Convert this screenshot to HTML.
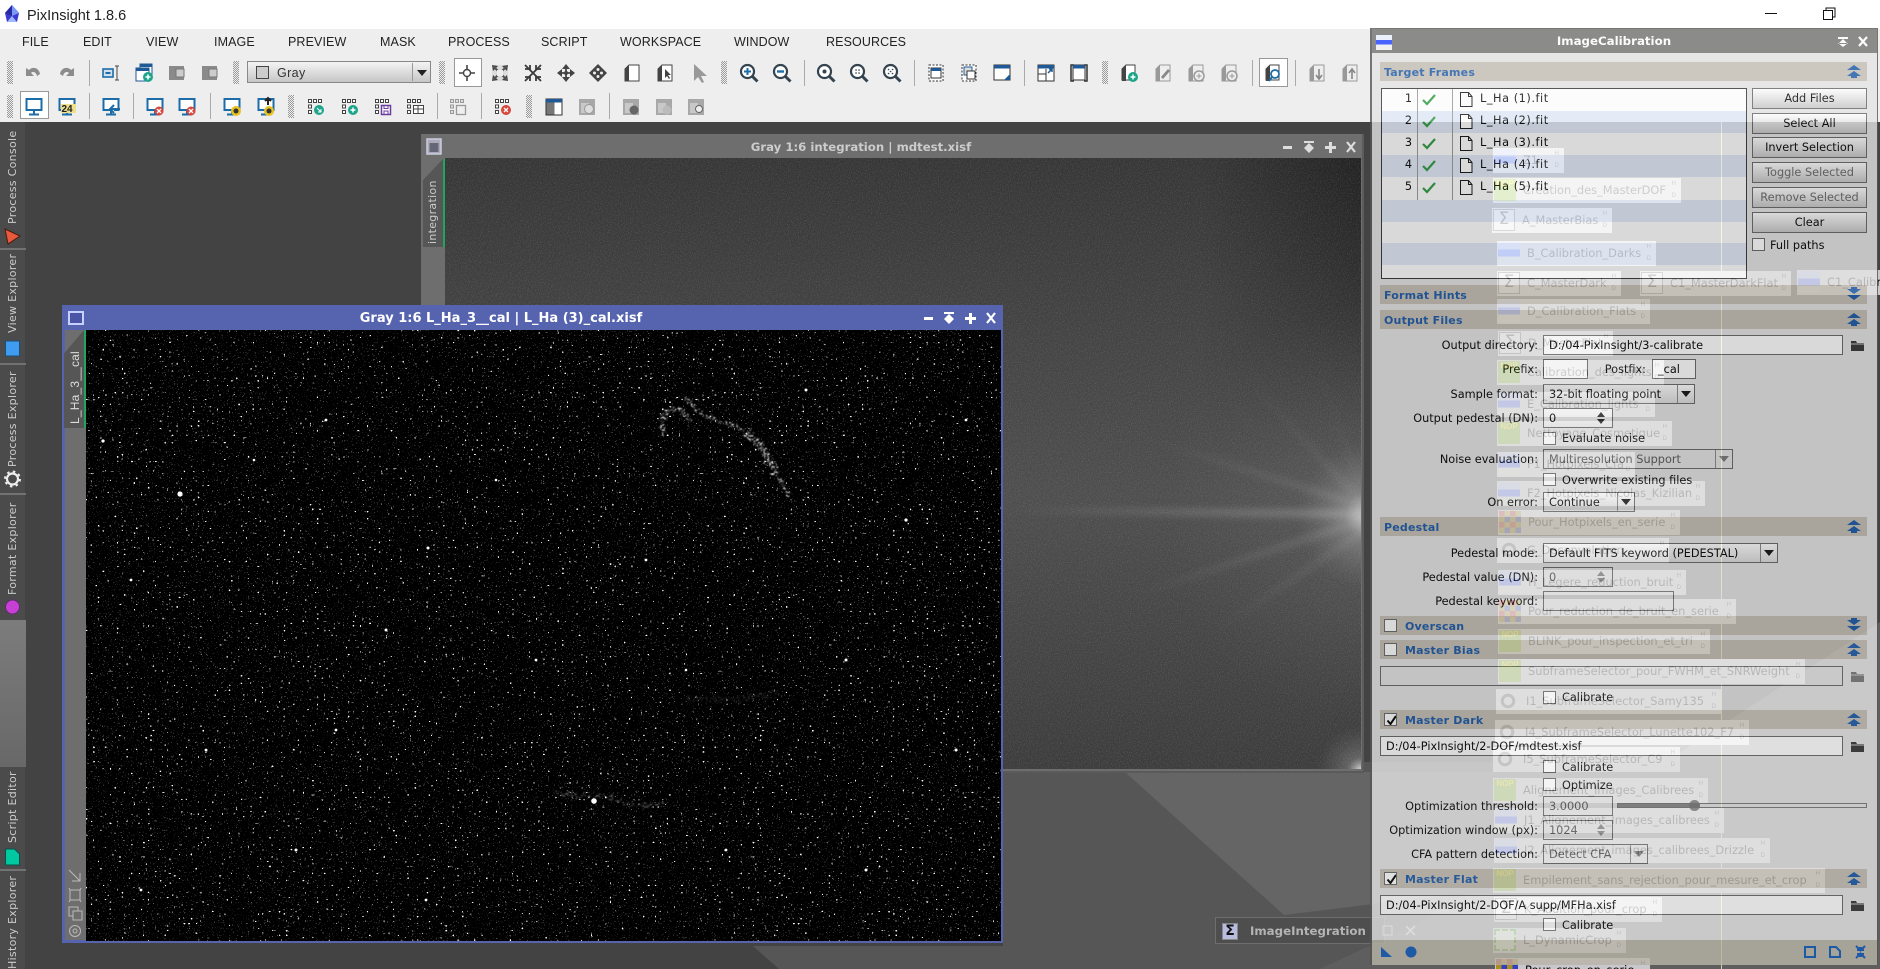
<!DOCTYPE html>
<html><head><meta charset="utf-8"><title>PixInsight 1.8.6</title>
<style>
html,body{margin:0;padding:0;width:1880px;height:969px;overflow:hidden;background:#424242;font-family:"Liberation Sans",sans-serif;font-size:12px;color:#111}
#root{position:relative;width:1880px;height:969px;overflow:hidden;contain:paint}
.a,.a *{box-sizing:border-box}
.a{position:absolute;white-space:nowrap}
.m{top:32px;font-size:12.5px;line-height:20px;color:#222;letter-spacing:.1px}
.grip{position:absolute;width:6px;background:conic-gradient(#9a9a9a 25%,#eee 0 50%,#9a9a9a 0 75%,#eee 0) 0 0/2px 2px}
.sep{position:absolute;width:1px;background:#aaa}
.vt{writing-mode:vertical-rl;transform:rotate(180deg);color:#ccc;font-family:"DejaVu Sans",sans-serif;font-size:11px;letter-spacing:.3px;line-height:14px}
.tab{position:absolute;left:0;width:25px;background:#4b4b4b}
.wt{font-family:"DejaVu Sans",sans-serif;font-weight:bold;line-height:24px;text-align:center}
.g{position:absolute;height:25px;background:#c8c8cc;white-space:nowrap;color:#000;font-family:"DejaVu Sans",sans-serif;font-size:11.4px;line-height:24px;padding-left:30px;box-sizing:border-box}
.g i{position:absolute;left:1px;top:1px;width:22px;height:22px;font-style:normal;display:block;overflow:hidden;text-align:center;line-height:22px}
.g:before,.g:after{position:absolute;right:5px;font:6px/7px "Liberation Sans",sans-serif;color:#333}
.g:before{content:"H";top:3px}.g:after{content:"D";bottom:3px}
.n{background:#7ab010;color:#ffe800;font:bold 8px "Liberation Sans",sans-serif!important}
.b{background:linear-gradient(180deg,#b4c0ec 0 35%,#3a5cf0 35% 65%,#d0d0c8 65%)}
.s{background:#ddd;border:1px solid #444;color:#111;font-size:17px;line-height:19px!important;font-family:"DejaVu Sans",sans-serif;box-sizing:border-box}
.ge{background:radial-gradient(circle,transparent 4px,#444 4.5px 7px,transparent 7.5px)}
.gr{background:conic-gradient(#a89020 25%,#3040c0 0 50%,#a89020 0 75%,#c02020 0) 0 0/11px 11px}
.cr{background:#d8e8c8;border:2px dashed #40a020;box-sizing:border-box}
.sec{position:absolute;left:1380px;width:487px;height:19px;background:#c4bfb3;color:#1a58a8;font-family:"DejaVu Sans",sans-serif;font-weight:bold;font-size:11px;line-height:21px;padding-left:4px;letter-spacing:.2px}
.l{position:absolute;right:342px;line-height:22px;font-family:"DejaVu Sans",sans-serif;font-size:11.3px;color:#000}
.e{position:absolute;height:20px;background:#fff;border:1px solid #666;line-height:20px;padding-left:5px;font-family:"DejaVu Sans",sans-serif;font-size:11.3px;color:#000;white-space:nowrap}
.d{background:transparent;color:#555}
.c{position:absolute;height:20px;border:1px solid #666;background:linear-gradient(#fff,#dcdcdc);line-height:20px;padding-left:5px;font-family:"DejaVu Sans",sans-serif;font-size:11.3px;color:#000;white-space:nowrap}
.c b{position:absolute;right:0;top:0;width:17px;height:18px;border-left:1px solid #888}
.c b:after{content:"";position:absolute;left:3px;top:6px;border:5px solid transparent;border-top:6px solid #111;border-bottom:0}
.c.d{background:transparent;color:#555}.c.d b:after{border-top-color:#777}
.sp:after{content:"";position:absolute;right:7px;top:3px;border:4px solid transparent;border-bottom:5px solid #222;border-top:0}
.sp:before{content:"";position:absolute;right:7px;bottom:3px;border:4px solid transparent;border-top:5px solid #222;border-bottom:0}
.sp.d:after{border-bottom-color:#888}.sp.d:before{border-top-color:#888}
.k{position:absolute;left:1543px;width:13px;height:13px;background:#fff;border:1px solid #666}
.t{position:absolute;left:1562px;line-height:16px;font-family:"DejaVu Sans",sans-serif;font-size:11.3px;color:#000}
.btn{position:absolute;left:1752px;width:115px;height:21px;border:1px solid #666;background:linear-gradient(#fff,#c8c8c8);text-align:center;line-height:19px;font-family:"DejaVu Sans",sans-serif;font-size:11.3px;color:#000}
.btn.d{color:#666}
.r{position:absolute;left:1382px;width:364px;height:22px;background:#e2eaf8}
.num{position:absolute;left:1382px;width:30px;text-align:right;line-height:22px;font-family:"DejaVu Sans",sans-serif;font-size:11.3px;color:#000}
.f{position:absolute;left:1480px;line-height:22px;font-family:"DejaVu Sans",sans-serif;font-size:11.3px;letter-spacing:.55px;color:#000}
</style></head><body><div id="root">

<svg width="0" height="0" style="position:absolute"><defs>
<filter id="s1" x="0" y="0" width="100%" height="100%" color-interpolation-filters="sRGB"><feTurbulence type="fractalNoise" baseFrequency=".8" numOctaves="1" seed="7"/><feColorMatrix values="0 0 0 0 1 0 0 0 0 1 0 0 0 0 1 14 0 0 0 -9.3"/></filter>
<filter id="s2" x="0" y="0" width="100%" height="100%" color-interpolation-filters="sRGB"><feTurbulence type="fractalNoise" baseFrequency=".42" numOctaves="1" seed="23"/><feColorMatrix values="0 0 0 0 1 0 0 0 0 1 0 0 0 0 1 22 0 0 0 -15.6"/></filter>
<filter id="nz" x="0" y="0" width="100%" height="100%" color-interpolation-filters="sRGB"><feTurbulence type="fractalNoise" baseFrequency=".9" numOctaves="2" seed="3"/><feColorMatrix values="0 0 0 0 1 0 0 0 0 1 0 0 0 0 1 2.5 0 0 0 -1.15"/></filter>
<filter id="neb" x="-20%" y="-20%" width="140%" height="140%" color-interpolation-filters="sRGB"><feTurbulence type="fractalNoise" baseFrequency=".25" numOctaves="2" seed="5" result="t"/><feDisplacementMap in="SourceGraphic" in2="t" scale="10" xChannelSelector="R" yChannelSelector="G" result="d"/><feTurbulence type="fractalNoise" baseFrequency=".55" numOctaves="2" seed="11"/><feColorMatrix values="0 0 0 0 1 0 0 0 0 1 0 0 0 0 1 6 0 0 0 -2.9" result="sp"/><feComposite in="d" in2="sp" operator="in"/><feGaussianBlur stdDeviation=".4"/></filter>
<filter id="bl6" x="-20%" y="-40%" width="140%" height="180%"><feGaussianBlur stdDeviation="4"/></filter>

<g id="undo"><path d="M4 6v8h8l-3-3c2-2 5-1 6 3l3-2c-1-6-7-8-11-4z" fill="#8c8c8c"/></g>
<g id="redo"><path d="M18 6v8h-8l3-3c-2-2-5-1-6 3l-3-2c1-6 7-8 11-4z" fill="#8c8c8c"/></g>
<g id="ibeam"><rect x="3" y="7" width="10" height="8" fill="#cfe0ee" stroke="#1c6ca8" stroke-width="1.6"/><rect x="5.5" y="10" width="5" height="2" fill="#1c6ca8"/><path d="M15 4h4M17 4v14M15 18h4" stroke="#444" fill="none"/></g>
<g id="wp"><rect x="7" y="2" width="12" height="10" fill="#fff" stroke="#1f5a96"/><rect x="7" y="2" width="12" height="3" fill="#1f5a96"/><rect x="3" y="6" width="13" height="13" fill="#fff" stroke="#1f5a96"/><rect x="3" y="6" width="13" height="3" fill="#1f5a96"/><circle cx="15" cy="15" r="5" fill="#1ca58a"/><path d="M12.5 15h5M15 12.5v5" stroke="#fff" stroke-width="1.6"/></g>
<g id="gs"><rect x="3" y="4" width="15" height="14" fill="#8a8a8a"/><rect x="10" y="7" width="8" height="8" fill="#ccc" stroke="#777"/></g>
<g id="tgt"><path d="M11 3v16M3 11h16" stroke="#444" stroke-width="1.6"/><circle cx="11" cy="11" r="3.5" fill="#fff" stroke="#444" stroke-width="1.4"/></g>
<g id="fo"><path d="M3 3h16v16H3z" fill="#ddd"/><path d="M3 3l6 1-5 5zM19 3l-6 1 5 5zM3 19l6-1-5-5zM19 19l-6-1 5-5z" fill="#444"/><path d="M4 4l14 14M18 4L4 18" stroke="#555" stroke-width="2"/><rect x="8" y="8" width="6" height="6" fill="#eee"/></g>
<g id="fi"><path d="M3 3l16 16M19 3L3 19M3 7h5M8 3v5M19 7h-5M14 3v5M3 15h5M8 19v-5M19 15h-5M14 19v-5" stroke="#3a3a3a" stroke-width="1.8"/></g>
<g id="mv"><path d="M11 2l4 5H7zM11 20l4-5H7zM2 11l5-4v8zM20 11l-5-4v8z" fill="#444"/><path d="M11 5v12M5 11h12" stroke="#444" stroke-width="1.8"/><circle cx="11" cy="11" r="2" fill="#444"/></g>
<g id="dm"><path d="M11 2l9 9-9 9-9-9z" fill="#444"/><circle cx="11" cy="7.5" r="1.5" fill="#eee"/><circle cx="11" cy="14.5" r="1.5" fill="#eee"/><circle cx="7.5" cy="11" r="1.5" fill="#eee"/><circle cx="14.5" cy="11" r="1.5" fill="#eee"/></g>
<g id="dc"><path d="M4 7l4-4h10v16H4z" fill="#fff" stroke="#444"/><path d="M4 7l4-4v16H4z" fill="#444"/></g>
<g id="dcc"><path d="M4 7l4-4h10v16H4z" fill="#fff" stroke="#444"/><path d="M4 7l4-4v16H4z" fill="#444"/><path d="M11 7v9l2-2 2 3 1-1-2-3h3z" fill="#444"/></g>
<g id="cur"><path d="M6 2v17l4-4 4 6 2-1-3-6h6z" fill="#999"/></g>
<g id="mg"><circle cx="9.5" cy="9.5" r="6.5" fill="#fff" stroke="#34444f" stroke-width="2.2"/><path d="M14 14l5.5 5.5" stroke="#34444f" stroke-width="3"/></g>
<g id="wd"><rect x="4" y="3" width="14" height="16" fill="#fff" stroke="#333" stroke-dasharray="2 1.5"/><rect x="6" y="6" width="10" height="10" fill="#fff" stroke="#333"/><rect x="6" y="6" width="10" height="3" fill="#1f5a96"/></g>
<g id="wd2"><rect x="4" y="3" width="14" height="16" fill="#fff" stroke="#333" stroke-dasharray="2 1.5"/><rect x="6" y="5" width="8" height="8" fill="#ddd" stroke="#1f5a96"/><rect x="9" y="9" width="8" height="8" fill="#fff" stroke="#333"/></g>
<g id="wa"><rect x="3" y="3" width="16" height="15" fill="#fff" stroke="#333"/><rect x="3" y="3" width="16" height="3.5" fill="#1f5a96"/><path d="M19 18h-6l6-6z" fill="#1f5a96"/></g>
<g id="wb"><rect x="3" y="3" width="16" height="16" fill="#fff" stroke="#333"/><rect x="3" y="3" width="16" height="3.5" fill="#1f5a96"/><path d="M11 7v12M3 12h8" stroke="#333"/><path d="M13 11l4-4M14 7h3v3" stroke="#1f5a96" fill="none" stroke-width="1.5"/></g>
<g id="wc"><path d="M6 3H3v16h3M16 3h3v16h-3" stroke="#333" fill="none" stroke-width="1.5"/><rect x="5" y="3" width="12" height="15" fill="#fff" stroke="#333"/><rect x="5" y="3" width="12" height="3.5" fill="#1f5a96"/></g>
<g id="dk"><path d="M4 7l4-4h9v15H4z" fill="#fff" stroke="#444"/><path d="M4 7l4-4v16H4z" fill="#444"/></g>
<g id="dgr"><path d="M4 7l4-4h10v16H4z" fill="#eee" stroke="#999"/><path d="M4 7l4-4v16H4z" fill="#999"/></g>
<g id="mon"><rect x="3.5" y="3" width="15" height="11" fill="#fff" stroke="#1c6ca8" stroke-width="2"/><path d="M11 14v4M6 18.5h10" stroke="#1c6ca8" stroke-width="2"/></g>
<g id="gd"><g fill="#fff" stroke="#444"><rect x="3.5" y="3.5" width="3" height="3"/><rect x="8.5" y="3.5" width="3" height="3"/><rect x="13.5" y="3.5" width="3" height="3"/><rect x="3.5" y="9" width="3" height="3"/><rect x="3.5" y="14.5" width="3" height="3"/></g></g>
<g id="ggd"><g fill="#ddd" stroke="#999"><rect x="3.5" y="3.5" width="3" height="3"/><rect x="8.5" y="3.5" width="3" height="3"/><rect x="13.5" y="3.5" width="3" height="3"/><rect x="3.5" y="9" width="3" height="3"/><rect x="3.5" y="14.5" width="3" height="3"/></g></g>
<g id="ch"><rect x="3" y="3" width="16" height="16" fill="#a8a8a8"/><rect x="5" y="7" width="8" height="10" fill="#c8c8c8"/></g>
<g id="chb"><rect x="3" y="3" width="16" height="16" fill="#fff" stroke="#333"/><rect x="3" y="3" width="16" height="3.5" fill="#1f5a96"/><rect x="3.5" y="6.5" width="8" height="12" fill="#777"/></g>
<g id="upp"><path d="M1 7l7-5 7 5zM1 13l7-5 7 5zM5 13h6v2H5z" fill="#1a58a8"/></g>
<g id="dnn"><path d="M5 0h6v2H5zM1 2h14L8 7zM1 8h14l-7 5z" fill="#1a58a8"/></g>
<g id="fold"><path d="M1 3h5l1 2h7v8H1z" fill="#333"/><path d="M1 6h13" stroke="#ccc"/></g>
<g id="fig"><path d="M1 3h5l1 2h7v8H1z" fill="#777"/><path d="M1 6h13" stroke="#ccc"/></g>
<g id="chk"><path d="M1 8l4 4 8-9" fill="none" stroke="#2c9a40" stroke-width="2.2"/></g>
<g id="doc"><path d="M.5 1.5h8l3.5 4v10H.5z" fill="#fff" stroke="#111"/><path d="M8.5 1.5v4h3.5" fill="none" stroke="#111"/></g>
<g id="cm"><path d="M2.5 6.5l3 3.5 5.5-8" fill="none" stroke="#000" stroke-width="2"/></g>
</defs></svg>

<!-- wallpaper -->
<svg class="a" style="left:0;top:122px" width="1880" height="847">
<rect width="1880" height="847" fill="#424242"/>
<rect x="26" width="1854" height="847" fill="#434343"/>
<polygon points="1003,640 1880,640 1880,847 779,847 753,824 1003,824" fill="#565656"/>
<polygon points="1125,650 1880,650 1880,720 1284,793" fill="#656565"/>
<polygon points="1420,800 1880,500 1880,847 1320,847" fill="#5e5e5e"/>
<rect x="1721" y="0" width="1" height="847" fill="#d8d0a0"/>
</svg>

<!-- back window -->
<div class="a" style="left:421px;top:134px;width:943px;height:639px;background:#6e6e6e;border-bottom:2px solid #5a5a5a;border-right:2px solid #5c5c5c">
<div class="a wt" style="left:0;top:1px;width:880px;color:#ccc;font-size:11.7px">Gray 1:6 integration | mdtest.xisf</div>
<svg class="a" style="left:5px;top:4px" width="16" height="17"><rect x="1" y="1" width="14" height="15" fill="#aab" stroke="#ccd" stroke-width="1.5"/><rect x="3.5" y="5" width="9" height="9" fill="#667"/></svg>
<svg class="a" style="left:855px;top:6px" width="85" height="14"><path d="M7 6h9v3H7z" fill="#ddd"/><path d="M28 1h10v2H28zM33 3l5 5H28zM33 13l5-5H28z" fill="#ddd"/><path d="M53 2h3v4h4v3h-4v4h-3V9h-4V6h4z" fill="#ddd"/><path d="M71 2l8 10M79 2l-8 10" stroke="#ddd" stroke-width="2.2"/></svg>
</div>
<svg class="a" style="left:445px;top:158px" width="916" height="613">
<defs>
<linearGradient id="bg1" x1="0" y1="0" x2="0" y2="1"><stop offset="0" stop-color="#363636"/><stop offset=".3" stop-color="#444444"/><stop offset=".55" stop-color="#4e4e4e"/><stop offset="1" stop-color="#3c3c3c"/></linearGradient>
<radialGradient id="st" gradientUnits="userSpaceOnUse" cx="925" cy="358" r="210"><stop offset="0" stop-color="#fff" stop-opacity=".75"/><stop offset=".12" stop-color="#ddd" stop-opacity=".32"/><stop offset=".35" stop-color="#999" stop-opacity=".1"/><stop offset="1" stop-color="#888" stop-opacity="0"/></radialGradient>
<radialGradient id="cr" gradientUnits="userSpaceOnUse" cx="916" cy="613" r="45"><stop offset="0" stop-color="#fff" stop-opacity=".85"/><stop offset=".3" stop-color="#bbb" stop-opacity=".3"/><stop offset="1" stop-color="#888" stop-opacity="0"/></radialGradient>
<linearGradient id="rs" x1="0" y1="0" x2="1" y2="0"><stop offset="0" stop-color="#1c1c1c" stop-opacity="0"/><stop offset="1" stop-color="#1c1c1c" stop-opacity=".75"/></linearGradient>
<linearGradient id="rm" x1="0" y1="0" x2="0" y2="1"><stop offset="0" stop-color="#fff"/><stop offset="1" stop-color="#000"/></linearGradient>
<mask id="mk"><rect x="760" width="156" height="300" fill="url(#rm)"/></mask>
</defs>
<rect width="916" height="613" fill="url(#bg1)"/>
<rect x="760" width="156" height="300" fill="url(#rs)" mask="url(#mk)"/>
<rect width="916" height="613" fill="url(#st)"/>
<g filter="url(#bl6)" opacity=".24"><polygon points="916,352 560,352 916,360" fill="#fff"/><polygon points="916,345 700,280 916,350" fill="#ccc"/><polygon points="916,360 680,440 916,366" fill="#ccc"/><polygon points="916,340 800,220 916,345" fill="#bbb"/><polygon points="916,372 760,480 916,378" fill="#aaa"/><polygon points="916,330 860,170 916,335" fill="#aaa"/></g>
<rect width="916" height="613" fill="url(#cr)"/>
<rect width="916" height="613" filter="url(#nz)" opacity=".14"/>
<rect y="611" width="916" height="2" fill="#6e6e6e"/>
</svg>
<div class="a" style="left:423px;top:159px;width:20px;height:88px;background:#565656;clip-path:polygon(100% 0,100% 100%,0 100%,0 24%)"></div>
<div class="a" style="left:443px;top:159px;width:2px;height:88px;background:#22a45c"></div>
<div class="a vt" style="left:426px;top:180px;height:64px">integration</div>

<!-- ImageIntegration icon -->
<div class="a" style="left:1215px;top:917px;width:170px;height:27px;background:#4e4e4e;border:1px solid #6e6e6e">
<div class="a" style="left:6px;top:5px;width:16px;height:17px;background:#b8bce0;border:1px solid #888;color:#111;font:bold 14px/15px 'DejaVu Sans',sans-serif;text-align:center">Σ</div>
<div class="a" style="left:34px;top:1px;font:bold 11.8px/24px 'DejaVu Sans',sans-serif;color:#b4b4b4">ImageIntegration</div>
</div>

<!-- front window -->
<div class="a" style="left:62px;top:305px;width:941px;height:638px;background:#6e6e6e;border:3px solid #5663ae;border-top:0">
<div class="a" style="left:-3px;top:0;width:941px;height:25px;background:#5663ae"></div>
<div class="a wt" style="left:0;top:2px;width:872px;color:#fff;font-size:13px">Gray 1:6 L_Ha_3__cal | L_Ha (3)_cal.xisf</div>
<svg class="a" style="left:3px;top:6px" width="16" height="14"><rect x="1" y="1" width="14" height="12" fill="#4a55a5" stroke="#c8d0ff" stroke-width="2"/></svg>
<svg class="a" style="left:851px;top:6px" width="85" height="14"><path d="M8 6h9v3H8z" fill="#fff"/><path d="M28 1h10v2H28zM33 3l5 5H28zM33 13l5-5H28z" fill="#fff"/><path d="M53 2h3v4h4v3h-4v4h-3V9h-4V6h4z" fill="#fff"/><path d="M71 2l8 10M79 2l-8 10" stroke="#fff" stroke-width="2.2"/></svg>
</div>
<svg class="a" style="left:86px;top:330px" width="915" height="611">
<rect width="915" height="611" fill="#000"/>
<rect width="915" height="611" filter="url(#s1)" opacity=".45"/>
<rect width="915" height="611" filter="url(#s2)"/>
<g filter="url(#neb)" fill="none" stroke="#e8e8e8" stroke-linecap="round">
<path d="M601 68C606 78 616 86 637 92S672 110 681 125" stroke-width="3"/>
<path d="M662 104C676 114 682 128 690 142" stroke-width="7"/>
<path d="M680 130C690 145 698 155 704 166" stroke-width="3"/>
<path d="M577 104C574 88 580 78 590 79S600 88 602 90" stroke-width="4"/>
<path d="M470 463C490 468 510 462 530 470S560 475 575 473" stroke-width="3.5" opacity=".4"/>
<path d="M600 370C630 368 660 372 690 362" stroke-width="5" opacity=".15"/>
</g>
<g fill="#fff">
<circle cx="94" cy="164" r="2.6"/><circle cx="508" cy="471" r="2.8"/><circle cx="17" cy="111" r="1.6"/><circle cx="342" cy="218" r="1.5"/>
<circle cx="45" cy="250" r="1.4"/><circle cx="168" cy="130" r="1.3"/><circle cx="240" cy="90" r="1.4"/><circle cx="300" cy="300" r="1.5"/>
<circle cx="120" cy="420" r="1.4"/><circle cx="210" cy="520" r="1.5"/><circle cx="410" cy="150" r="1.3"/><circle cx="450" cy="330" r="1.4"/>
<circle cx="560" cy="230" r="1.4"/><circle cx="720" cy="60" r="1.5"/><circle cx="820" cy="190" r="1.6"/><circle cx="760" cy="330" r="1.5"/>
<circle cx="870" cy="420" r="1.5"/><circle cx="640" cy="520" r="1.4"/><circle cx="340" cy="570" r="1.4"/><circle cx="780" cy="540" r="1.5"/>
<circle cx="55" cy="560" r="1.4"/><circle cx="880" cy="90" r="1.4"/><circle cx="600" cy="340" r="1.3"/><circle cx="250" cy="400" r="1.4"/>
</g>
</svg>
<div class="a" style="left:64px;top:330px;width:20px;height:98px;background:#565656;clip-path:polygon(100% 0,100% 100%,0 100%,0 24%)"></div>
<div class="a" style="left:84px;top:330px;width:2px;height:98px;background:#22a45c"></div>
<div class="a vt" style="left:68px;top:352px;height:72px;font-family:'Liberation Sans',sans-serif;font-size:12px;letter-spacing:.2px;color:#ddd">L_Ha_3__cal</div>
<svg class="a" style="left:66px;top:868px" width="18" height="72" fill="none" stroke="#bbb"><path d="M3 2l11 11M14 5v8H6"/><path d="M4 22h10v10H4z"/><path d="M4 22l-1-2M14 22l1-2M4 32l-1 2M14 32l1 2"/><rect x="3" y="39" width="9" height="9"/><rect x="7" y="43" width="9" height="9" fill="#6e6e6e"/><circle cx="9" cy="63" r="5.5"/><circle cx="9" cy="63" r="2"/></svg>

<!-- left tabs -->
<div class="tab" style="top:122px;height:126px"></div>
<div class="a" style="left:0;top:248px;width:26px;height:2px;background:#727272"></div>
<div class="tab" style="top:250px;height:113px"></div>
<div class="a" style="left:0;top:363px;width:26px;height:2px;background:#727272"></div>
<div class="tab" style="top:365px;height:128px"></div>
<div class="a" style="left:0;top:493px;width:26px;height:2px;background:#727272"></div>
<div class="tab" style="top:495px;height:125px"></div>
<div class="a" style="left:0;top:620px;width:26px;height:147px;background:linear-gradient(#7c7c7c,#686868)"></div>
<div class="tab" style="top:767px;height:102px"></div>
<div class="a" style="left:0;top:869px;width:26px;height:2px;background:#727272"></div>
<div class="tab" style="top:871px;height:98px"></div>
<div class="a vt" style="left:6px;top:126px;height:98px">Process Console</div>
<div class="a vt" style="left:6px;top:255px;height:78px">View Explorer</div>
<div class="a vt" style="left:6px;top:368px;height:99px">Process Explorer</div>
<div class="a vt" style="left:6px;top:499px;height:96px">Format Explorer</div>
<div class="a vt" style="left:6px;top:771px;height:72px">Script Editor</div>
<div class="a vt" style="left:6px;top:876px;height:93px">History Explorer</div>
<svg class="a" style="left:0;top:122px" width="26" height="770">
<path d="M5 107l15 7-12 8z" fill="#e85a3c" stroke="#4a1a10"/>
<rect x="5.5" y="219" width="14" height="15" fill="#3f9cf0" stroke="#1e4e78"/>
<circle cx="12.5" cy="357" r="5.5" fill="none" stroke="#eee" stroke-width="2.2"/><circle cx="12.5" cy="357" r="7.5" fill="none" stroke="#eee" stroke-width="2" stroke-dasharray="2.5 3.4"/>
<circle cx="12.5" cy="485" r="7" fill="#c640d4" stroke="#602a70"/>
<path d="M5.5 727h9l5 5v11h-14z" fill="#00c8a0" stroke="#0e5048"/>
</svg>

<!-- app chrome -->
<div class="a" style="left:0;top:0;width:1880px;height:29px;background:#fff"></div>
<div class="a" style="left:0;top:29px;width:1880px;height:93px;background:#eee"></div>
<svg class="a" style="left:3px;top:4px" width="18" height="20"><path d="M9 1l7 8-2 9H4L2 9z" fill="#3a3ad0"/><path d="M9 1l7 8-7 3z" fill="#7a9af8"/><path d="M9 1L2 9l7 3z" fill="#2a2aa0"/><path d="M4 18h10l-5-6z" fill="#a0b8ff"/></svg>
<div class="a" style="left:27px;top:7px;font-size:14.5px;line-height:18px;color:#222">PixInsight 1.8.6</div>
<svg class="a" style="left:1760px;top:4px" width="80" height="20"><path d="M5 9.5h12" stroke="#111"/><rect x="63.5" y="6.5" width="9" height="9" fill="none" stroke="#111"/><path d="M66 6V4h9v9h-2" fill="none" stroke="#111"/></svg>

<div class="a m" style="left:22px">FILE</div><div class="a m" style="left:83px">EDIT</div><div class="a m" style="left:146px">VIEW</div><div class="a m" style="left:214px">IMAGE</div><div class="a m" style="left:288px">PREVIEW</div><div class="a m" style="left:380px">MASK</div><div class="a m" style="left:448px">PROCESS</div><div class="a m" style="left:541px">SCRIPT</div><div class="a m" style="left:620px">WORKSPACE</div><div class="a m" style="left:734px">WINDOW</div><div class="a m" style="left:826px">RESOURCES</div>

<!-- toolbars -->
<div class="grip" style="left:7px;top:61px;height:23px"></div>
<div class="grip" style="left:7px;top:95px;height:23px"></div>
<div class="grip" style="left:233px;top:61px;height:23px"></div>
<div class="grip" style="left:439px;top:61px;height:23px"></div>
<div class="grip" style="left:721px;top:61px;height:23px"></div>
<div class="grip" style="left:1102px;top:61px;height:23px"></div>
<div class="grip" style="left:288px;top:95px;height:23px"></div>
<div class="grip" style="left:526px;top:95px;height:23px"></div>
<div class="sep" style="left:89px;top:60px;height:26px"></div><div class="sep" style="left:804px;top:60px;height:26px"></div><div class="sep" style="left:914px;top:60px;height:26px"></div><div class="sep" style="left:1024px;top:60px;height:26px"></div><div class="sep" style="left:1252px;top:60px;height:26px"></div><div class="sep" style="left:1295px;top:60px;height:26px"></div>
<div class="sep" style="left:89px;top:93px;height:26px"></div><div class="sep" style="left:133px;top:93px;height:26px"></div><div class="sep" style="left:210px;top:93px;height:26px"></div><div class="sep" style="left:437px;top:93px;height:26px"></div><div class="sep" style="left:481px;top:93px;height:26px"></div><div class="sep" style="left:609px;top:93px;height:26px"></div>
<div class="a" style="left:454px;top:58px;width:28px;height:29px;background:#fff;border:1px solid #999"></div>
<div class="a" style="left:1259px;top:58px;width:29px;height:29px;background:#fff;border:1px solid #999"></div>
<div class="a" style="left:20px;top:91px;width:29px;height:28px;background:#fff;border:1px solid #999"></div>
<div class="a" style="left:247px;top:61px;width:184px;height:22px;background:linear-gradient(#f4f4f4,#c6c6c6);border:1px solid #888">
<div class="a" style="left:8px;top:4px;width:13px;height:13px;background:#ccc;border:1px solid #444"></div>
<div class="a" style="left:29px;top:1px;font-size:12.5px;line-height:20px;letter-spacing:.4px;color:#333">Gray</div>
<div class="a" style="right:17px;top:1px;width:1px;height:18px;background:#999"></div>
<div class="a" style="right:3px;top:8px;border:5px solid transparent;border-top:6px solid #222;border-bottom:0"></div>
</div>
<svg class="a" style="left:0;top:0" width="1370" height="122">
<use href="#undo" x="22" y="62"/><use href="#redo" x="56" y="62"/><use href="#ibeam" x="100" y="62"/><use href="#wp" x="133" y="62"/><use href="#gs" x="166" y="62"/><use href="#gs" x="199" y="62"/>
<use href="#tgt" x="456" y="62"/><use href="#fo" x="489" y="62"/><use href="#fi" x="522" y="62"/><use href="#mv" x="555" y="62"/><use href="#dm" x="587" y="62"/><use href="#dc" x="621" y="62"/><use href="#dcc" x="654" y="62"/><use href="#cur" x="688" y="62"/>
<g transform="translate(738 62)"><use href="#mg"/><path d="M6 9.5h7M9.5 6v7" stroke="#1c6ca8" stroke-width="2"/></g>
<g transform="translate(771 62)"><use href="#mg"/><path d="M6 9.5h7" stroke="#1c6ca8" stroke-width="2.4"/></g>
<g transform="translate(815 62)"><use href="#mg"/><circle cx="9.5" cy="9.5" r="2" fill="#34444f"/></g>
<g transform="translate(848 62)"><use href="#mg"/><path d="M8 8h.1M11 8h.1M8 11h.1M11 11h.1" stroke="#34444f" stroke-width="1.6" stroke-linecap="round"/></g>
<g transform="translate(881 62)"><use href="#mg"/><path d="M7.5 7.5h.1M11.5 7.5h.1M7.5 11.5h.1M11.5 11.5h.1M9.5 9.5h.1" stroke="#34444f" stroke-width="1.6" stroke-linecap="round"/></g>
<use href="#wd" x="925" y="62"/><use href="#wd2" x="958" y="62"/><use href="#wa" x="991" y="62"/><use href="#wb" x="1035" y="62"/><use href="#wc" x="1068" y="62"/>
<g transform="translate(1118 62)"><use href="#dk"/><circle cx="15" cy="15" r="5" fill="#1ca58a"/><path d="M12.5 15h5M15 12.5v5" stroke="#fff" stroke-width="1.5"/></g>
<g transform="translate(1152 62)"><use href="#dgr"/><path d="M9 15l7-8 2 2-7 8z" fill="#888"/></g>
<g transform="translate(1185 62)"><use href="#dgr"/><circle cx="14" cy="14" r="5" fill="#eee" stroke="#999" stroke-width="1.5"/><path d="M11.5 14h5M14 11.5v5" stroke="#999"/></g>
<g transform="translate(1218 62)"><use href="#dgr"/><circle cx="14" cy="14" r="5" fill="#eee" stroke="#999" stroke-width="1.5"/><path d="M11.5 14h5M14 11.5v5" stroke="#999"/></g>
<g transform="translate(1262 62)"><use href="#dk"/><circle cx="13" cy="12" r="4" fill="#fff" stroke="#1c6ca8" stroke-width="1.8"/><path d="M10 15l-3 4" stroke="#1c6ca8" stroke-width="2"/></g>
<g transform="translate(1306 62)"><use href="#dgr"/><path d="M13 7v9M10 13l3 4 3-4" stroke="#888" fill="none" stroke-width="1.6"/></g>
<g transform="translate(1339 62)"><use href="#dgr"/><path d="M13 17V8M10 11l3-4 3 4" stroke="#888" fill="none" stroke-width="1.6"/></g>

<use href="#mon" x="23" y="96"/>
<g transform="translate(56 96)"><use href="#mon"/><rect x="5" y="8" width="15" height="9" fill="#efe08a"/><text x="5.5" y="16" font-family="Liberation Sans" font-weight="bold" font-size="10" fill="#222">24</text></g>
<g transform="translate(100 96)"><use href="#mon"/><path d="M10 13h10M14 9l-4 4 4 4" stroke="#1c6ca8" stroke-width="2" fill="#eee"/></g>
<g transform="translate(144 96)"><use href="#mon"/><circle cx="15" cy="15" r="4.5" fill="#d8453c"/><path d="M13 13l4 4M17 13l-4 4" stroke="#fff" stroke-width="1.3"/></g>
<g transform="translate(176 96)"><use href="#mon"/><circle cx="15" cy="15" r="4.5" fill="#d8453c"/><path d="M13 13l4 4M17 13l-4 4" stroke="#fff" stroke-width="1.3"/></g>
<g transform="translate(221 96)"><use href="#mon"/><circle cx="15" cy="15" r="5" fill="#e8c020"/><circle cx="15" cy="15" r="2.5" fill="#333"/></g>
<g transform="translate(255 96)"><use href="#mon"/><path d="M13 9V2M10 5l3-3 3 3" stroke="#222" stroke-width="2" fill="#222"/><circle cx="14" cy="15" r="5" fill="#e8c020"/><circle cx="14" cy="15" r="2.5" fill="#333"/></g>
<g transform="translate(305 96)"><use href="#gd"/><circle cx="14" cy="14" r="5" fill="#1ca58a"/><path d="M12 12l4 4M16 13v3h-3" stroke="#fff" fill="none"/></g>
<g transform="translate(339 96)"><use href="#gd"/><circle cx="14" cy="14" r="5" fill="#1ca58a"/><path d="M11.5 14h5M14 11.5v5" stroke="#fff" stroke-width="1.5"/></g>
<g transform="translate(372 96)"><use href="#gd"/><rect x="9.5" y="9.5" width="9" height="9" fill="#fff" stroke="#6a3ca0" stroke-width="1.5"/><path d="M12 9.5v3h4v-3M12 18v-3h4v3" stroke="#6a3ca0" fill="none"/></g>
<g transform="translate(404 96)"><use href="#gd"/><rect x="9.5" y="9.5" width="10" height="8" fill="#fff" stroke="#444"/><path d="M9.5 13h10M14 9.5v8" stroke="#444"/></g>
<g transform="translate(447 96)"><use href="#ggd"/><rect x="9.5" y="9.5" width="9" height="9" fill="#eee" stroke="#999" stroke-width="1.3"/></g>
<g transform="translate(492 96)"><use href="#gd"/><circle cx="14" cy="14" r="5" fill="#d8453c"/><path d="M12 12l4 4M16 12l-4 4" stroke="#fff" stroke-width="1.3"/></g>
<use href="#chb" x="543" y="96"/>
<g transform="translate(576 96)"><use href="#ch"/><circle cx="13" cy="13" r="4.5" fill="#ddd" stroke="#999"/></g>
<g transform="translate(620 96)"><use href="#ch"/><circle cx="14" cy="14" r="4.5" fill="#666"/></g>
<g transform="translate(653 96)"><use href="#ch"/><circle cx="14" cy="14" r="4.5" fill="#bbb"/></g>
<g transform="translate(685 96)"><use href="#ch"/><circle cx="14" cy="13" r="3.5" fill="#eee" stroke="#666"/></g>
</svg>

<!-- process icons in the workspace, seen through the translucent panel -->
<div class="a" style="left:0;top:0;width:1880px;height:969px">
<div class="g" style="left:1493px;top:148px;width:71px"><i class="b"></i>Z1</div>
<div class="g" style="left:1493px;top:178px;width:188px"><i class="n">NOP</i>Creation_des_MasterDOF</div>
<div class="g" style="left:1492px;top:208px;width:120px"><i class="s">Σ</i>A_MasterBias</div>
<div class="g" style="left:1497px;top:241px;width:159px"><i class="b"></i>B_Calibration_Darks</div>
<div class="g" style="left:1497px;top:271px;width:124px"><i class="s">Σ</i>C_MasterDark</div>
<div class="g" style="left:1640px;top:271px;width:151px"><i class="s">Σ</i>C1_MasterDarkFlat</div>
<div class="g" style="left:1797px;top:270px;width:120px"><i class="b"></i>C1_Calibration</div>
<div class="g" style="left:1497px;top:299px;width:153px"><i class="b"></i>D_Calibration_Flats</div>
<div class="g" style="left:1498px;top:331px;width:115px"><i class="s">Σ</i>D_MasterFlat</div>
<div class="g" style="left:1497px;top:360px;width:167px"><i class="n">NOP</i>Calibration_des_lights</div>
<div class="g" style="left:1497px;top:392px;width:158px"><i class="b"></i>E_Calibration_lights</div>
<div class="g" style="left:1497px;top:421px;width:175px"><i class="n">NOP</i>Nettoyage_Cosmetique</div>
<div class="g" style="left:1497px;top:452px;width:138px"><i class="b"></i>F1_Hotpixels_Cfa</div>
<div class="g" style="left:1497px;top:481px;width:208px"><i class="b"></i>F2_Hotpixels_Nicolas_Kizilian</div>
<div class="g" style="left:1498px;top:510px;width:182px"><i class="gr"></i>Pour_Hotpixels_en_serie</div>
<div class="g" style="left:1497px;top:538px;width:172px"><i class="ge"></i>G_Deconvolution</div>
<div class="g" style="left:1498px;top:570px;width:188px"><i class="b"></i>H_Legere_reduction_bruit</div>
<div class="g" style="left:1498px;top:599px;width:238px"><i class="gr"></i>Pour_reduction_de_bruit_en_serie</div>
<div class="g" style="left:1498px;top:629px;width:212px"><i class="n">NOP</i>BLINK_pour_inspection_et_tri</div>
<div class="g" style="left:1498px;top:659px;width:307px"><i class="n">NOP</i>SubframeSelector_pour_FWHM_et_SNRWeight</div>
<div class="g" style="left:1496px;top:689px;width:225px"><i class="ge"></i>I1_SubframeSelector_Samy135</div>
<div class="g" style="left:1495px;top:720px;width:254px"><i class="ge"></i>I4_SubframeSelector_Lunette102_F7</div>
<div class="g" style="left:1493px;top:747px;width:187px"><i class="ge"></i>I5_SubframeSelector_C9</div>
<div class="g" style="left:1493px;top:778px;width:215px"><i class="n">NOP</i>Alignement_Images_Calibrees</div>
<div class="g" style="left:1494px;top:808px;width:230px"><i class="b"></i>J1_Alignement_Images_calibrees</div>
<div class="g" style="left:1494px;top:838px;width:276px"><i class="b"></i>J2_Alignement_images_calibrees_Drizzle</div>
<div class="g" style="left:1493px;top:868px;width:332px"><i class="n">NOP</i>Empilement_sans_rejection_pour_mesure_et_crop</div>
<div class="g" style="left:1494px;top:897px;width:168px"><i class="s">Σ</i>K_Addition_pour_crop</div>
<div class="g" style="left:1493px;top:928px;width:133px"><i class="cr"></i>L_DynamicCrop</div>
<div class="g" style="left:1495px;top:958px;width:155px"><i class="gr"></i>Pour_crop_en_serie</div>
</div>

<!-- translucent panel: everything inside shares a single opacity -->
<div class="a" style="left:0;top:0;width:1880px;height:969px;opacity:.8;clip-path:inset(28px 2px 4px 1370px)">
<div class="a" style="left:1370px;top:28px;width:508px;height:937px;background:#e4e4e4;border:1px solid #555;border-left-width:2px"></div>
<div class="a" style="left:1372px;top:29px;width:505px;height:24px;background:#727270"></div>
<div class="a" style="left:1372px;top:29px;width:484px;text-align:center;font:bold 11.8px/24px 'DejaVu Sans',sans-serif;color:#fff">ImageCalibration</div>
<div class="a" style="left:1376px;top:35px;width:16px;height:15px;background:linear-gradient(180deg,#e8f0ff 0 35%,#2040ff 35% 65%,#f0f0f0 65%)"></div>
<svg class="a" style="left:1835px;top:34px" width="38" height="16"><path d="M3 3h10v2H3zM8 5l5 5H3zM8 13l5-4H3z" fill="#fff"/><path d="M24 3l8 9M32 3l-8 9" stroke="#fff" stroke-width="2.2"/></svg>

<div class="sec" style="top:62px">Target Frames</div>
<div class="sec" style="top:285px">Format Hints</div>
<div class="sec" style="top:310px">Output Files</div>
<div class="sec" style="top:517px">Pedestal</div>
<div class="sec" style="top:616px;padding-left:25px">Overscan</div>
<div class="sec" style="top:640px;padding-left:25px">Master Bias</div>
<div class="sec" style="top:710px;padding-left:25px">Master Dark</div>
<div class="sec" style="top:869px;padding-left:25px">Master Flat</div>
<div class="k" style="left:1384px;top:619px"></div>
<div class="k" style="left:1384px;top:643px"></div>
<div class="k" style="left:1384px;top:713px"><svg width="11" height="11" style="display:block"><use href="#cm"/></svg></div>
<div class="k" style="left:1384px;top:872px"><svg width="11" height="11" style="display:block"><use href="#cm"/></svg></div>
<svg class="a" style="left:1846px;top:60px" width="16" height="840"><use href="#upp" y="3"/><use href="#dnn" y="227"/><use href="#upp" y="251"/><use href="#upp" y="458"/><use href="#dnn" y="558"/><use href="#upp" y="581"/><use href="#upp" y="651"/><use href="#upp" y="810"/></svg>

<!-- list -->
<div class="a" style="left:1381px;top:88px;width:366px;height:191px;background:#fff;border:1px solid #333"></div>
<div class="r" style="top:111px"></div><div class="r" style="top:155px"></div><div class="r" style="top:200px"></div><div class="r" style="top:243px"></div>
<div class="a" style="left:1417px;top:89px;width:1px;height:111px;background:#999"></div>
<div class="a" style="left:1452px;top:89px;width:1px;height:111px;background:#999"></div>
<div class="num" style="top:88px">1</div><div class="num" style="top:110px">2</div><div class="num" style="top:132px">3</div><div class="num" style="top:154px">4</div><div class="num" style="top:176px">5</div>
<div class="f" style="top:88px">L_Ha (1).fit</div><div class="f" style="top:110px">L_Ha (2).fit</div><div class="f" style="top:132px">L_Ha (3).fit</div><div class="f" style="top:154px">L_Ha (4).fit</div><div class="f" style="top:176px">L_Ha (5).fit</div>
<svg class="a" style="left:1422px;top:88px" width="52" height="115"><use href="#chk" y="4"/><use href="#chk" y="26"/><use href="#chk" y="48"/><use href="#chk" y="70"/><use href="#chk" y="92"/><use href="#doc" x="38" y="3"/><use href="#doc" x="38" y="25"/><use href="#doc" x="38" y="47"/><use href="#doc" x="38" y="69"/><use href="#doc" x="38" y="91"/></svg>
<div class="btn" style="top:88px">Add Files</div><div class="btn" style="top:113px">Select All</div><div class="btn" style="top:137px">Invert Selection</div><div class="btn d" style="top:162px">Toggle Selected</div><div class="btn d" style="top:187px">Remove Selected</div><div class="btn" style="top:212px">Clear</div>
<div class="k" style="left:1752px;top:238px"></div><div class="t" style="left:1770px;top:238px">Full paths</div>

<!-- output files -->
<div class="l" style="top:335px">Output directory:</div><div class="e" style="left:1543px;top:335px;width:300px">D:/04-PixInsight/3-calibrate</div>
<div class="l" style="top:359px">Prefix:</div><div class="e" style="left:1543px;top:359px;width:45px"></div>
<div class="l" style="top:359px;right:234px">Postfix:</div><div class="e" style="left:1652px;top:359px;width:44px">_cal</div>
<div class="l" style="top:384px">Sample format:</div><div class="c" style="left:1543px;top:384px;width:152px">32-bit floating point<b></b></div>
<div class="l" style="top:408px">Output pedestal (DN):</div><div class="e sp" style="left:1543px;top:408px;width:70px;background:linear-gradient(#fff,#ececec)">0</div>
<div class="k" style="top:432px"></div><div class="t" style="top:431px">Evaluate noise</div>
<div class="l" style="top:449px">Noise evaluation:</div><div class="c d" style="left:1543px;top:449px;width:190px">Multiresolution Support<b></b></div>
<div class="k" style="top:473px"></div><div class="t" style="top:473px">Overwrite existing files</div>
<div class="l" style="top:492px">On error:</div><div class="c" style="left:1543px;top:492px;width:92px">Continue<b></b></div>
<!-- pedestal -->
<div class="l" style="top:543px">Pedestal mode:</div><div class="c" style="left:1543px;top:543px;width:235px">Default FITS keyword (PEDESTAL)<b></b></div>
<div class="l" style="top:567px">Pedestal value (DN):</div><div class="e sp d" style="left:1543px;top:567px;width:70px">0</div>
<div class="l" style="top:591px">Pedestal keyword:</div><div class="e d" style="left:1543px;top:591px;width:131px"></div>
<!-- master bias -->
<div class="e d" style="left:1380px;top:666px;width:463px"></div>
<div class="k" style="top:691px"></div><div class="t" style="top:690px">Calibrate</div>
<!-- master dark -->
<div class="e" style="left:1380px;top:736px;width:463px">D:/04-PixInsight/2-DOF/mdtest.xisf</div>
<div class="k" style="top:760px"></div><div class="t" style="top:760px">Calibrate</div>
<div class="k" style="top:778px"></div><div class="t" style="top:778px">Optimize</div>
<div class="l" style="top:796px">Optimization threshold:</div><div class="e d" style="left:1543px;top:796px;width:70px">3.0000</div>
<div class="a" style="left:1617px;top:803px;width:250px;height:5px;border:1px solid #777;background:linear-gradient(90deg,#888 31%,#e4e4e4 31%)"></div>
<div class="a" style="left:1689px;top:800px;width:11px;height:11px;border-radius:50%;background:#777"></div>
<div class="l" style="top:820px">Optimization window (px):</div><div class="e sp d" style="left:1543px;top:820px;width:70px">1024</div>
<div class="l" style="top:844px">CFA pattern detection:</div><div class="c d" style="left:1543px;top:844px;width:105px">Detect CFA<b></b></div>
<!-- master flat -->
<div class="e" style="left:1380px;top:895px;width:463px">D:/04-PixInsight/2-DOF/A supp/MFHa.xisf</div>
<div class="k" style="top:918px"></div><div class="t" style="top:918px">Calibrate</div>
<svg class="a" style="left:1850px;top:338px" width="16" height="580"><use href="#fold"/><use href="#fig" y="331"/><use href="#fold" y="401"/><use href="#fold" y="560"/></svg>
<svg class="a" style="left:1380px;top:924px" width="40" height="14"><rect x="3" y="2" width="9" height="9" fill="none" stroke="#fff"/><path d="M26 2l9 9M35 2l-9 9" stroke="#fff" stroke-width="1.5"/></svg>
<!-- bottom bar -->
<div class="a" style="left:1372px;top:940px;width:505px;height:25px;background:#b8b4a8"></div>
<svg class="a" style="left:1372px;top:940px" width="504" height="25"><path d="M9 7v10h11z" fill="#0e58b8"/><circle cx="39" cy="12" r="5.5" fill="#0e58b8"/><rect x="433" y="7" width="10" height="10" fill="none" stroke="#0e58b8" stroke-width="2"/><path d="M458 7h6l4 4v6h-10z" fill="none" stroke="#0e58b8" stroke-width="2"/><path d="M484 6l5 5M493 6l-5 5M484 18l5-5M493 18l-5-5M485 10h3V7M492 10h-3V7M485 14h3v3M492 14h-3v3" stroke="#0e58b8" stroke-width="2" fill="none"/></svg>
</div>
</div></body></html>
